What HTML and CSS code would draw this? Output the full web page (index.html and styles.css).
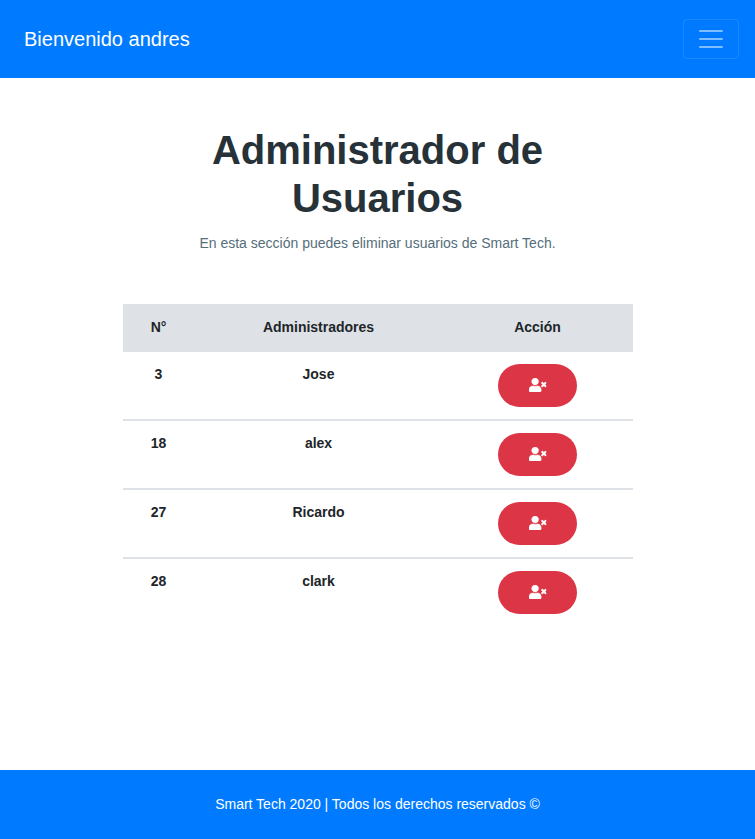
FILE: index.html
```html
<!DOCTYPE html>
<html lang="es">
<head>
<meta charset="utf-8">
<title>Administrador de Usuarios</title>
<link rel="stylesheet" href="styles.css">
</head>
<body>
<svg class="sprite" aria-hidden="true">
  <symbol id="user-times" viewBox="0 0 640 512"><path fill="currentColor" stroke="currentColor" stroke-width="14" d="M589.6 240l45.6-45.6c6.3-6.3 6.3-16.5 0-22.8l-22.8-22.8c-6.3-6.3-16.5-6.3-22.8 0L544 194.4l-45.6-45.6c-6.3-6.3-16.5-6.3-22.8 0l-22.8 22.8c-6.3 6.3-6.3 16.5 0 22.8l45.6 45.6-45.6 45.6c-6.3 6.3-6.3 16.5 0 22.8l22.8 22.8c6.3 6.3 16.5 6.3 22.8 0l45.6-45.6 45.6 45.6c6.3 6.3 16.5 6.3 22.8 0l22.8-22.8c6.3-6.3 6.3-16.5 0-22.8L589.6 240zM224 256c70.7 0 128-57.3 128-128S294.7 0 224 0 96 57.3 96 128s57.3 128 128 128zm89.6 32h-16.7c-22.2 10.2-46.9 16-72.9 16s-50.6-5.8-72.9-16h-16.7C60.2 288 0 348.2 0 422.4V464c0 26.500 21.500 48 48 48h352c26.500 0 48-21.500 48-48v-41.600c0-74.200-60.200-134.400-134.400-134.400z"/></symbol>
</svg>
<nav class="navbar">
  <span class="brand">Bienvenido andres</span>
  <button class="toggler" aria-label="Menú"><svg viewBox="0 0 30 30"><path stroke="rgba(255,255,255,.5)" stroke-linecap="round" stroke-miterlimit="10" stroke-width="2" fill="none" d="M4 7h22M4 15h22M4 23h22"/></svg></button>
</nav>
<main>
  <h1>Administrador de Usuarios</h1>
  <p class="lead">En esta sección puedes eliminar usuarios de Smart Tech.</p>
  <table>
    <thead><tr><th class="num">N°</th><th class="name">Administradores</th><th class="action">Acción</th></tr></thead>
    <tbody>
      <tr><th>3</th><th>Jose</th><td><button class="delete" aria-label="Eliminar"><svg><use href="#user-times"/></svg></button></td></tr>
      <tr><th>18</th><th>alex</th><td><button class="delete" aria-label="Eliminar"><svg><use href="#user-times"/></svg></button></td></tr>
      <tr><th>27</th><th>Ricardo</th><td><button class="delete" aria-label="Eliminar"><svg><use href="#user-times"/></svg></button></td></tr>
      <tr><th>28</th><th>clark</th><td><button class="delete" aria-label="Eliminar"><svg><use href="#user-times"/></svg></button></td></tr>
    </tbody>
  </table>
</main>
<footer>Smart Tech 2020 | Todos los derechos reservados ©</footer>
</body>
</html>
```
FILE: styles.css
```css
* { box-sizing: border-box; }
body {
  margin: 0;
  min-height: 839px;
  display: flex;
  flex-direction: column;
  font: 14px/21px "Liberation Sans", Arial, sans-serif;
  color: #212529;
  background: #fff;
}
.sprite { display: none; }
.navbar {
  display: flex;
  align-items: center;
  justify-content: space-between;
  height: 78px;
  padding: 0 16px 0 24px;
  background: #007bff;
}
.brand { font-size: 20px; line-height: 30px; color: #fff; }
.toggler {
  width: 56px;
  height: 40px;
  padding: 0;
  display: flex;
  align-items: center;
  justify-content: center;
  background: transparent;
  border: 1px solid rgba(255, 255, 255, .1);
  border-radius: 4px;
}
.toggler svg { width: 30px; height: 30px; }
main {
  flex: 1;
  width: 511px;
  margin: 0 auto;
  padding-top: 48px;
  text-align: center;
}
h1 {
  width: 400px;
  margin: 0 auto 11px;
  font-size: 40px;
  line-height: 48px;
  color: #263238;
}
.lead { margin: 0 0 50px; color: #546e7a; }
table {
  width: 510px;
  margin-left: 1px;
  table-layout: fixed;
  border-collapse: collapse;
}
th, td { padding: 12px; vertical-align: top; }
thead th { height: 47px; padding-top: 13px; padding-bottom: 11px; background: #dee2e6; }
.num { width: 71px; }
.name { width: 249px; }
td { padding-right: 14px; }
thead .action { padding-right: 13px; }
tbody tr { border-top: 2px solid #dee2e6; }
td { line-height: 0; }
.delete {
  width: 79px;
  height: 43px;
  padding: 0 0 2px 1.5px;
  display: inline-flex;
  align-items: center;
  justify-content: center;
  color: #fff;
  background: #dc3545;
  border: 0;
  border-radius: 22px;
}
.delete svg { width: 17.5px; height: 14px; overflow: visible; }
footer {
  height: 69px;
  line-height: 69px;
  text-align: center;
  color: #fff;
  background: #007bff;
}
```
